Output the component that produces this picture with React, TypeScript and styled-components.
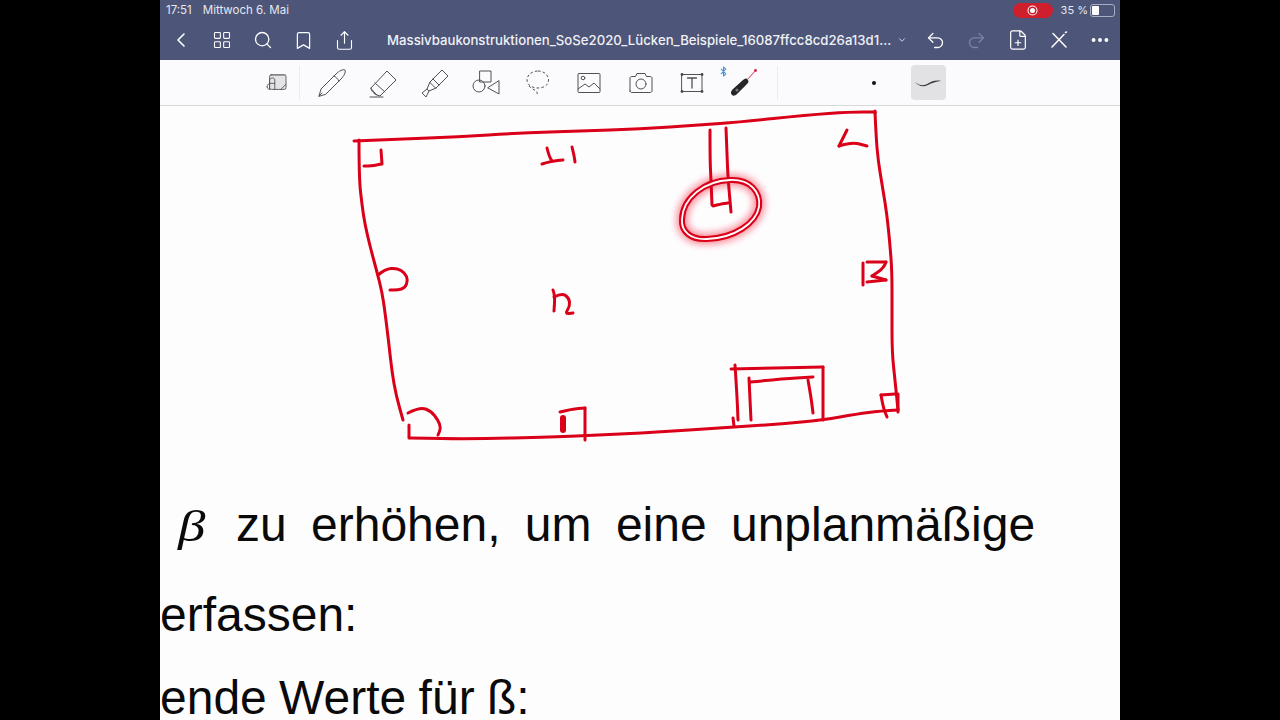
import styled, { createGlobalStyle } from 'styled-components';
import { Bluetooth, Bookmark, ChevronDown, ChevronLeft, Ellipsis, FilePlus, LayoutGrid, Redo2, Search, Share, Undo2 } from 'lucide-react';

const GlobalStyle = createGlobalStyle`
    html, body {
        margin: 0;
        height: 100%;
        background: #000;
        overflow: hidden;
    }
`;

type Pt = [number, number];

// strokes of the handwriting, in screenshot coordinates
const strokes: Pt[][] = [
    // outline
    [[354, 141], [400, 139], [457, 137], [520, 133], [580, 131], [640, 129], [700, 125], [740, 122], [807, 115], [850, 112], [875, 112]],
    [[875, 112], [876, 135], [878, 160], [883, 190], [887, 215], [890, 245], [892, 272], [892, 310], [892, 352], [895, 380], [898, 410]],
    [[898, 410], [880, 411], [857, 414], [823, 420], [780, 424], [733, 427], [690, 430], [640, 433], [600, 435], [553, 437], [473, 439], [410, 438]],
    [[409, 438], [409, 425]],
    [[359, 140], [359, 178], [362, 205], [365, 225], [371, 250], [377, 272], [382, 292], [385, 312], [389, 345], [392, 372], [396, 395], [403, 420]],
    // top left
    [[364, 166], [372, 166], [381, 164]],
    [[381, 150], [382, 164]],
    // top middle
    [[542, 164], [552, 161], [563, 160]],
    [[547, 148], [549, 156], [552, 161]],
    [[572, 147], [574, 155], [575, 162]],
    // top right
    [[847, 130], [843, 138], [839, 146]],
    [[839, 146], [852, 142], [867, 146]],
    // left
    [[378, 275], [385, 269], [397, 268], [405, 273], [408, 280], [405, 288], [398, 290], [390, 290]],
    // centre
    [[553, 290], [555, 295], [554, 311]],
    [[554, 297], [562, 293], [569, 298], [570, 306], [565, 314], [573, 313]],
    // bottom left
    [[408, 413], [420, 407], [431, 411], [438, 420], [441, 428], [438, 435]],
    // bottom middle
    [[560, 412], [572, 409], [585, 408]],
    [[585, 408], [585, 425], [585, 440]],
    // right
    [[863, 263], [863, 285]],
    [[867, 262], [886, 262]],
    [[886, 262], [884, 268], [872, 276]],
    [[872, 276], [886, 280]],
    [[886, 280], [867, 282]],
    // bottom right
    [[881, 395], [895, 394]],
    [[881, 395], [883, 407], [887, 417]],
    // column through the ring
    [[710, 130], [710, 160], [711, 180], [712, 205]],
    [[726, 128], [727, 155], [728, 178], [731, 212]],
    [[713, 206], [721, 204], [728, 203]],
    // table
    [[731, 369], [775, 368], [823, 367]],
    [[823, 367], [823, 395], [823, 420]],
    [[735, 365], [737, 395], [738, 420]],
    [[749, 378], [750, 400], [751, 420]],
    [[750, 382], [780, 379], [813, 377]],
    [[808, 380], [811, 397], [813, 413]],
    [[733, 418], [734, 426]],
];

const smooth = (pts: Pt[]) => {
    if (pts.length === 2) return `M${pts[0][0]} ${pts[0][1]}L${pts[1][0]} ${pts[1][1]}`;
    let d = `M${pts[0][0]} ${pts[0][1]}`;
    for (let i = 1; i < pts.length - 1; i++) {
        const mx = (pts[i][0] + pts[i + 1][0]) / 2;
        const my = (pts[i][1] + pts[i + 1][1]) / 2;
        d += `Q${pts[i][0]} ${pts[i][1]} ${mx} ${my}`;
    }
    const last = pts[pts.length - 1];
    return `${d}L${last[0]} ${last[1]}`;
};

const ringPath = 'M682 219C683 198 704 181 730 180C750 179 761 192 759 207C756 223 735 238 707 239C690 240 681 231 682 219Z';

function Drawing() {
    return (
        <Sketch viewBox="160 106 960 384">
            <defs>
                <filter id="glow" x="-30%" y="-30%" width="160%" height="160%">
                    <feGaussianBlur stdDeviation="4" />
                </filter>
            </defs>
            <path d={ringPath} fill="none" stroke="#f2182e" strokeWidth="8" opacity="0.7" filter="url(#glow)" />
            <g fill="none" stroke="#da0019" strokeWidth="3" strokeLinecap="round" strokeLinejoin="round">
                {strokes.map((s, i) => (
                    <path key={i} d={smooth(s)} />
                ))}
                <path d="M563 418L563 430" strokeWidth="6" />
                <path d="M875 111L875 113M898 394L898 412" />
            </g>
            <path d={ringPath} fill="none" stroke="#da0019" strokeWidth="6" />
            <path d={ringPath} fill="none" stroke="#fff" strokeWidth="1.8" />
        </Sketch>
    );
}

const iconStroke = { fill: 'none', stroke: '#515155', strokeWidth: 1, strokeLinecap: 'round', strokeLinejoin: 'round' } as const;

function ReadModeIcon() {
    return (
        <svg width="21" height="19" viewBox="0 0 24 22" {...iconStroke}>
            <rect x="4" y="2" width="19" height="17" rx="2" fill="#e4e4e6" />
            <path d="M4 6C4 3 6 2 8 2H23V3H4Z" fill="#77777b" stroke="none" />
            <path d="M17 19L23 13" />
            <path d="M4 19V8C5 5 10 5 10 8V19M1 16C1 13 4 12 4 12M1 16C1 19 4 19 4 19M4 12H10" />
        </svg>
    );
}

function PenIcon() {
    return (
        <svg width="30" height="30" viewBox="0 0 30 30" {...iconStroke}>
            <path d="M2 28L4 21L19 6C22 3 26 1 28 2C29 4 27 8 24 11L9 26Z" />
            <path d="M17 8C19 9 21 11 22 13M2 28L5 25" />
        </svg>
    );
}

function EraserIcon() {
    return (
        <svg width="30" height="30" viewBox="0 0 30 30" {...iconStroke}>
            <path d="M3 20L19 3L28 12L12 28L9 27Z" />
            <path d="M7 15L17 24M2 29H15" />
            <path d="M3 20C3 23 6 26 9 27" />
        </svg>
    );
}

function MarkerIcon() {
    return (
        <svg width="30" height="30" viewBox="0 0 30 30" {...iconStroke}>
            <path d="M10 14L22 2L28 8L16 20Z" />
            <path d="M10 14L7 21L9 23L16 20M7 21L2 25L6 29L9 23M13 11L19 17" />
        </svg>
    );
}

function ShapesIcon() {
    return (
        <svg width="28" height="26" viewBox="0 0 28 26" {...iconStroke}>
            <rect x="8" y="1" width="11" height="11" />
            <circle cx="7" cy="16" r="6" />
            <path d="M27 11V24L16 18Z" />
        </svg>
    );
}

function LassoIcon() {
    return (
        <svg width="24" height="26" viewBox="0 0 24 26" {...iconStroke} strokeLinecap="butt" strokeDasharray="2.6 2.2">
            <path d="M12 1C18 1 22.5 5 22.5 10C22.5 15 18 18 12 18C6 18 1 15 1 10C1 5 6 1 12 1Z" />
            <path d="M3 16C5 19 10 20 11 22C11.5 23.5 11 24.5 10.5 25" />
        </svg>
    );
}

function ImageIcon() {
    return (
        <svg width="24" height="22" viewBox="0 0 24 22" {...iconStroke}>
            <rect x="1" y="1.5" width="22" height="19" rx="1" />
            <circle cx="6" cy="6" r="1.8" />
            <path d="M1 17L8 12L12 15L17 11L23 17" />
        </svg>
    );
}

function CameraIcon() {
    return (
        <svg width="24" height="22" viewBox="0 0 24 22" {...iconStroke}>
            <path d="M1 19V6C1 5 2 4.5 3 4.5H6.5L8 1.5H16L17.5 4.5H21C22 4.5 23 5 23 6V19C23 20 22 20.5 21 20.5H3C2 20.5 1 20 1 19Z" />
            <circle cx="12" cy="12" r="5" />
        </svg>
    );
}

function TextBoxIcon() {
    return (
        <svg width="24" height="22" viewBox="0 0 24 22">
            <path d="M2 2.5H22V19.5H2Z" {...iconStroke} />
            <path d="M7.5 6H16.5M12 6V16" {...iconStroke} strokeWidth={1.3} />
            {[[2, 2.5], [22, 2.5], [2, 19.5], [22, 19.5]].map(([x, y]) => (
                <circle key={`${x}-${y}`} cx={x} cy={y} r="1.4" fill="#47474b" />
            ))}
        </svg>
    );
}

function LaserIcon() {
    return (
        <svg width="28" height="30" viewBox="0 0 28 30">
            <path d="M2 27C0 25 1 23 3 21L13 12C15 10 17 10 18 12C19 14 18 15 17 16L7 26C5 28 3 28 2 27Z" fill="#26262a" />
            <circle cx="7" cy="22" r="1.6" fill="#77777b" />
            <path d="M18 11L25 3" stroke="#d65a6c" strokeWidth="1.1" />
            <circle cx="25.5" cy="2.5" r="1.4" fill="#d9213c" />
        </svg>
    );
}

function BrushStrokeIcon() {
    return (
        <svg width="28" height="12" viewBox="0 0 28 12">
            <path d="M1 5C6 9 10 9 14 6.5C18 4 22 3 27 4C22 4.5 18 6 14 8C9 10.5 4 9 1 5Z" fill="#3a3a3e" />
        </svg>
    );
}

function CutCloseIcon() {
    return (
        <svg width="18" height="18" viewBox="0 0 18 18" fill="none" stroke="#fff" strokeWidth="1.5" strokeLinecap="round">
            <path d="M2 16L14 3.5M3 2.5L16 16M15.5 1.5L16.5 1" />
        </svg>
    );
}

export default function App() {
    return (
        <>
            <GlobalStyle />
            <Stage>
                <Tablet>
                    <StatusBar>
                        <Clock>17:51</Clock>
                        <DateLabel>Mittwoch 6. Mai</DateLabel>
                        <StatusRight>
                            <RecordPill>
                                <RecordDot />
                            </RecordPill>
                            <BatteryText>35 %</BatteryText>
                            <Battery>
                                <BatteryLevel />
                            </Battery>
                        </StatusRight>
                    </StatusBar>
                    <NavBar>
                        <NavButton><ChevronLeft size={24} strokeWidth={1.6} /></NavButton>
                        <NavButton><LayoutGrid size={20} strokeWidth={1.3} /></NavButton>
                        <NavButton><Search size={20} strokeWidth={1.6} /></NavButton>
                        <NavButton><Bookmark size={21} strokeWidth={1.4} /></NavButton>
                        <NavButton><Share size={21} strokeWidth={1.3} /></NavButton>
                        <Title>
                            <TitleText>Massivbaukonstruktionen_SoSe2020_Lücken_Beispiele_16087ffcc8cd26a13d1...</TitleText>
                            <ChevronDown size={10} strokeWidth={2} />
                        </Title>
                        <NavButton><Undo2 size={21} strokeWidth={1.5} /></NavButton>
                        <NavButton $muted><Redo2 size={21} strokeWidth={1.5} /></NavButton>
                        <NavButton><FilePlus size={22} strokeWidth={1.3} /></NavButton>
                        <NavButton><CutCloseIcon /></NavButton>
                        <NavButton><Ellipsis size={22} strokeWidth={2.2} /></NavButton>
                    </NavBar>
                    <ToolBar>
                        <ReadSlot><ReadModeIcon /></ReadSlot>
                        <ToolDivider />
                        <ToolSlot><PenIcon /></ToolSlot>
                        <ToolSlot><EraserIcon /></ToolSlot>
                        <ToolSlot><MarkerIcon /></ToolSlot>
                        <ToolSlot><ShapesIcon /></ToolSlot>
                        <ToolSlot><LassoIcon /></ToolSlot>
                        <ToolSlot><ImageIcon /></ToolSlot>
                        <ToolSlot><CameraIcon /></ToolSlot>
                        <ToolSlot><TextBoxIcon /></ToolSlot>
                        <ToolSlot>
                            <LaserIcon />
                            <BluetoothBadge><Bluetooth size={11} strokeWidth={2.2} /></BluetoothBadge>
                        </ToolSlot>
                        <EndDivider />
                        <PenDot />
                        <SelectedStroke><BrushStrokeIcon /></SelectedStroke>
                    </ToolBar>
                    <Page>
                        <Drawing />
                        <TextLine $top={13} $spacing={11}>
                            <Beta>β</Beta>zu erhöhen, um eine unplanmäßige
                        </TextLine>
                        <TextLine $top={44}>erfassen:</TextLine>
                        <TextLine $top={39} $spacing={-1}>ende Werte für ß:</TextLine>
                    </Page>
                </Tablet>
            </Stage>
        </>
    );
}

const Stage = styled.div`
    width: 1280px;
    height: 720px;
    display: flex;
    justify-content: center;
    background: #000;
`;

const Tablet = styled.div`
    width: 960px;
    height: 720px;
    display: flex;
    flex-direction: column;
    overflow: hidden;
`;

const StatusBar = styled.div`
    height: 20px;
    display: flex;
    align-items: center;
    padding: 0 5px 0 6px;
    background: #4d5578;
    color: #e6e8f0;
    font-family: Inter, "Liberation Sans", sans-serif;
    font-size: 11.5px;
`;

const Clock = styled.span`
    margin-right: 11px;
`;

const DateLabel = styled.span``;

const StatusRight = styled.div`
    margin-left: auto;
    display: flex;
    align-items: center;
`;

const RecordPill = styled.div`
    width: 40px;
    height: 15px;
    border-radius: 8px;
    background: #cf1f2c;
    display: flex;
    align-items: center;
    justify-content: center;
`;

const RecordDot = styled.div`
    width: 5px;
    height: 5px;
    border-radius: 50%;
    background: #fff;
    box-shadow: 0 0 0 1.5px #cf1f2c, 0 0 0 2.5px #fff;
`;

const BatteryText = styled.span`
    margin: 0 2px 0 8px;
    font-size: 11px;
`;

const Battery = styled.div`
    width: 21px;
    height: 9px;
    padding: 1px;
    border: 1px solid #a9adc0;
    border-radius: 3px;
    display: flex;
`;

const BatteryLevel = styled.div`
    width: 7px;
    border-radius: 1px;
    background: #fff;
`;

const NavBar = styled.div`
    height: 40px;
    display: flex;
    align-items: center;
    background: #4d5578;
    color: #fff;
`;

const NavButton = styled.div<{ $muted?: boolean }>`
    width: 41px;
    height: 40px;
    flex: none;
    display: flex;
    align-items: center;
    justify-content: center;
    color: ${(props) => (props.$muted ? '#7d85a6' : '#fff')};
`;

const Title = styled.div`
    flex: 1;
    min-width: 0;
    margin-left: 22px;
    display: flex;
    align-items: center;
    gap: 6px;
    color: #f0f1f6;
`;

const TitleText = styled.span`
    font-family: Inter, "Liberation Sans", sans-serif;
    font-size: 13.2px;
    font-weight: 500;
    white-space: nowrap;
`;

const ToolBar = styled.div`
    height: 45px;
    flex: none;
    display: flex;
    align-items: center;
    padding-left: 98px;
    background: #fbfafc;
    border-bottom: 1px solid #d9d9dd;
`;

const ReadSlot = styled.div`
    width: 36px;
    display: flex;
    justify-content: center;
`;

const ToolDivider = styled.div`
    width: 1px;
    height: 34px;
    margin: 0 6px 0 5px;
    background: #ececee;
`;

const ToolSlot = styled.div`
    position: relative;
    width: 51.5px;
    height: 36px;
    flex: none;
    display: flex;
    align-items: center;
    justify-content: center;
`;

const BluetoothBadge = styled.div`
    position: absolute;
    left: 0;
    top: 1px;
    display: flex;
    color: #3f8fdc;
`;

const EndDivider = styled.div`
    width: 1px;
    height: 34px;
    margin-left: 7px;
    background: #ececee;
`;

const PenDot = styled.div`
    width: 4px;
    height: 4px;
    margin-left: 94px;
    border-radius: 50%;
    background: #111;
`;

const SelectedStroke = styled.div`
    width: 35px;
    height: 35px;
    margin-left: 35px;
    border-radius: 4px;
    background: #e2e1e4;
    display: flex;
    align-items: center;
    justify-content: center;
`;

const Page = styled.div`
    flex: 1;
    min-height: 0;
    background: #fefdfe;
    color: #0a0a0a;
    font-family: "Liberation Sans", Arial, sans-serif;
    font-size: 48px;
    overflow: hidden;
`;

const Sketch = styled.svg`
    display: block;
    width: 960px;
    height: 384px;
`;

const TextLine = styled.div<{ $top: number; $spacing?: number }>`
    margin-top: ${(props) => props.$top}px;
    line-height: 44px;
    white-space: nowrap;
    word-spacing: ${(props) => props.$spacing ?? 0}px;
`;

const Beta = styled.span`
    display: inline-block;
    width: 58px;
    margin-left: 18px;
    font-family: "Liberation Serif", serif;
    font-size: 44px;
    font-style: italic;
    transform: scaleX(1.25);
    transform-origin: left center;
`;
